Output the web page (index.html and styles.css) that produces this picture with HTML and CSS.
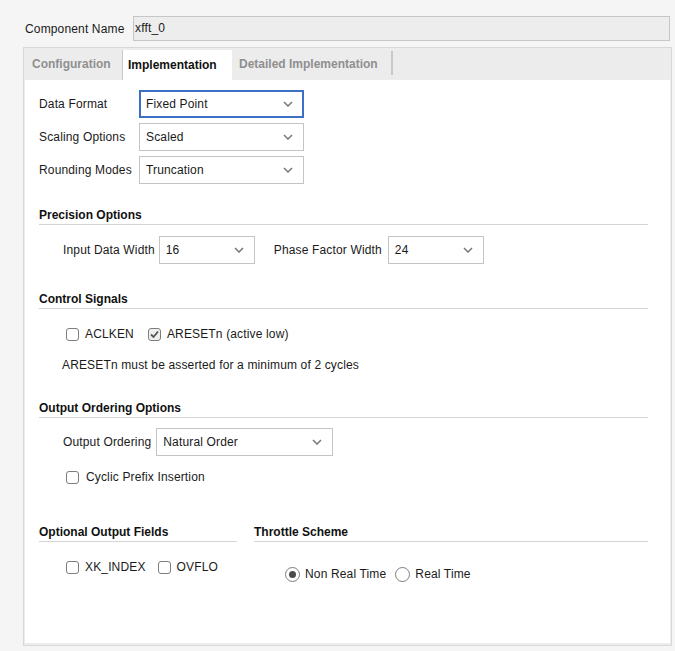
FILE: index.html
```html
<!DOCTYPE html>
<html>
<head>
<meta charset="utf-8">
<link rel="stylesheet" href="styles.css">
</head>
<body>
<div class="top">
  <span class="top-label">Component Name</span>
  <div class="name-input">xfft_0</div>
</div>
<div class="panel">
  <div class="tabs">
    <div class="tab">Configuration</div>
    <div class="tab active">Implementation</div>
    <div class="tab">Detailed Implementation</div>
    <div class="tab-sep"></div>
  </div>
  <div class="content">
    <div class="form-rows">
      <div class="row"><span class="lbl w100">Data Format</span><div class="select focus w165"><span>Fixed Point</span><svg class="chev" width="10" height="6" viewBox="0 0 10 6"><polyline points="1,1 5,5 9,1" fill="none" stroke="#777" stroke-width="1.5"/></svg></div></div>
      <div class="row"><span class="lbl w100">Scaling Options</span><div class="select w165"><span>Scaled</span><svg class="chev" width="10" height="6" viewBox="0 0 10 6"><polyline points="1,1 5,5 9,1" fill="none" stroke="#777" stroke-width="1.5"/></svg></div></div>
      <div class="row"><span class="lbl w100">Rounding Modes</span><div class="select w165"><span>Truncation</span><svg class="chev" width="10" height="6" viewBox="0 0 10 6"><polyline points="1,1 5,5 9,1" fill="none" stroke="#777" stroke-width="1.5"/></svg></div></div>
    </div>

    <div class="heading h1">Precision Options</div>
    <div class="row indent prec">
      <span class="lbl">Input Data Width</span>
      <div class="select w96"><span>16</span><svg class="chev" width="10" height="6" viewBox="0 0 10 6"><polyline points="1,1 5,5 9,1" fill="none" stroke="#777" stroke-width="1.5"/></svg></div>
      <span class="lbl pfw">Phase Factor Width</span>
      <div class="select w96"><span>24</span><svg class="chev" width="10" height="6" viewBox="0 0 10 6"><polyline points="1,1 5,5 9,1" fill="none" stroke="#777" stroke-width="1.5"/></svg></div>
    </div>

    <div class="heading h2">Control Signals</div>
    <div class="checks cs">
      <label class="chk"><span class="box"></span>ACLKEN</label>
      <label class="chk"><span class="box checked"><svg width="11" height="11" viewBox="0 0 11 11"><polyline points="2,5.5 4.5,8 9,2.5" fill="none" stroke="#555" stroke-width="1.8"/></svg></span>ARESETn (active low)</label>
    </div>
    <div class="note">ARESETn must be asserted for a minimum of 2 cycles</div>

    <div class="heading h3">Output Ordering Options</div>
    <div class="row indent oo">
      <span class="lbl">Output Ordering</span>
      <div class="select w177"><span>Natural Order</span><svg class="chev" width="10" height="6" viewBox="0 0 10 6"><polyline points="1,1 5,5 9,1" fill="none" stroke="#777" stroke-width="1.5"/></svg></div>
    </div>
    <div class="checks cp">
      <label class="chk"><span class="box"></span>Cyclic Prefix Insertion</label>
    </div>

    <div class="split">
      <div class="col left">
        <div class="heading">Optional Output Fields</div>
        <div class="checks of">
          <label class="chk"><span class="box"></span>XK_INDEX</label>
          <label class="chk"><span class="box"></span>OVFLO</label>
        </div>
      </div>
      <div class="col right">
        <div class="heading">Throttle Scheme</div>
        <div class="radios">
          <label class="rad"><span class="circle on"></span>Non Real Time</label>
          <label class="rad"><span class="circle"></span>Real Time</label>
        </div>
      </div>
    </div>
  </div>
</div>
</body>
</html>
```
FILE: styles.css
```css
html, body {
  margin: 0;
  padding: 0;
}
body {
  background: #f5f5f5;
  font-family: "Liberation Sans", Arial, sans-serif;
  font-size: 12px;
  letter-spacing: 0.15px;
  color: #1a1a1a;
  width: 675px;
  height: 651px;
  overflow: hidden;
}
.top {
  display: flex;
  align-items: center;
  padding: 16px 5px 0 25px;
}
.top-label {
  width: 108px;
  flex: none;
}
.name-input {
  flex: 1;
  height: 25px;
  box-sizing: border-box;
  border: 1px solid #c6c6c6;
  background: #ededed;
  padding-left: 1px;
  line-height: 23px;
}
.panel {
  margin: 6px 3px 0 23px;
  height: 599px;
  box-sizing: border-box;
  border: 1px solid #d8d8d8;
  background: #ececec;
  padding: 0 1px 2px 1px;
  display: flex;
  flex-direction: column;
}
.tabs {
  display: flex;
  align-items: stretch;
  height: 32px;
  flex: none;
}
.tab {
  font-weight: bold;
  letter-spacing: 0;
  color: #8f8f8f;
  line-height: 32px;
  padding: 0 5px 0 7px;
}
.tab:first-child {
  width: 86px;
  padding-right: 4px;
}
.tab.active {
  background: #fff;
  color: #111;
  border-left: 1px solid #c8c8c8;
  width: 98px;
  padding-left: 5px;
  padding-right: 6px;
  margin-top: 2px;
  line-height: 30px;
}
.tab-sep {
  width: 2px;
  background: #c8c8c8;
  margin: 3px 0 5px 8px;
}
.content {
  flex: 1;
  background: #fff;
  padding: 10px 22px 0 14px;
}
.form-rows {
  display: flex;
  flex-direction: column;
  gap: 5px;
}
.row {
  display: flex;
  align-items: center;
}
.lbl {
  flex: none;
  white-space: nowrap;
}
.w100 { width: 100px; }
.select {
  position: relative;
  height: 28px;
  box-sizing: border-box;
  border: 1px solid #c4c4c4;
  background: #fff;
  padding-left: 6px;
  display: flex;
  align-items: center;
  justify-content: space-between;
  padding-right: 10px;
  flex: none;
}
.select.focus {
  border: 2px solid #3d6fc4;
  padding-left: 5px;
  padding-right: 9px;
}
.w165 { width: 165px; }
.w96 { width: 96px; }
.w177 { width: 177px; }
.chev { display: block; }
.heading {
  font-weight: bold;
  letter-spacing: 0;
  color: #111;
  line-height: 14px;
  padding-top: 1px;
  padding-bottom: 2px;
  border-bottom: 1px solid #d4d4d4;
}
.h1 { margin-top: 23px; }
.indent { padding-left: 24px; }
.prec { margin-top: 11px; }
.prec .lbl { margin-right: 4px; }
.prec .pfw { margin-left: 19px; margin-right: 6px; }
.h2 { margin-top: 27px; }
.checks {
  display: flex;
  align-items: center;
  padding-left: 27px;
}
.chk {
  display: flex;
  align-items: center;
  height: 16px;
  margin-right: 14px;
  white-space: nowrap;
}
.box {
  width: 13px;
  height: 13px;
  box-sizing: border-box;
  border: 1px solid #7d7d7d;
  border-radius: 3px;
  background: #fff;
  margin-right: 6px;
  display: flex;
  align-items: center;
  justify-content: center;
}
.box.checked {
  background: #eeeeee;
}
.cs { margin-top: 17px; }
.note {
  margin-top: 16px;
  padding-left: 23px;
  line-height: 14px;
}
.h3 { margin-top: 28px; }
.oo { margin-top: 10px; }
.oo .lbl { margin-right: 5px; }
.cp { margin-top: 13px; }
.cp .box { margin-right: 7px; }
.split {
  display: flex;
  gap: 17px;
  margin-top: 39px;
}
.col.left { width: 198px; }
.col.right { flex: 1; }
.of { margin-top: 17px; }
.of .chk:first-child { margin-right: 12px; }
.radios {
  display: flex;
  align-items: center;
  margin-top: 24px;
  padding-left: 31px;
}
.rad {
  display: flex;
  align-items: center;
  height: 16px;
  margin-right: 9px;
  white-space: nowrap;
}
.circle {
  width: 15px;
  height: 15px;
  box-sizing: border-box;
  border: 1px solid #7d7d7d;
  border-radius: 50%;
  background: #fff;
  margin-right: 5px;
  position: relative;
}
.circle.on::after {
  content: "";
  position: absolute;
  left: 3px;
  top: 3px;
  width: 7px;
  height: 7px;
  border-radius: 50%;
  background: #4a4a4a;
}
```
